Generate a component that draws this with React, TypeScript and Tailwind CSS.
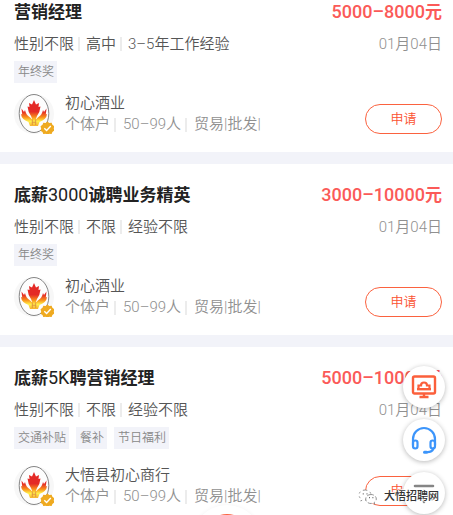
import React from "react";

type Job = {
  title: React.ReactNode;
  salary: string;
  needs: string[];
  date: string;
  tags: string[];
  company: string;
};

const num = (text: string) => <span className="text-lg leading-6 font-normal">{text}</span>;

const jobs: Job[] = [
  {
    title: "营销经理",
    salary: "5000–8000",
    needs: ["性别不限", "高中", "3–5年工作经验"],
    date: "01月04日",
    tags: ["年终奖"],
    company: "初心酒业",
  },
  {
    title: <>底薪{num("3000")}诚聘业务精英</>,
    salary: "3000–10000",
    needs: ["性别不限", "不限", "经验不限"],
    date: "01月04日",
    tags: ["年终奖"],
    company: "初心酒业",
  },
  {
    title: <>底薪{num("5K")}聘营销经理</>,
    salary: "5000–10000",
    needs: ["性别不限", "不限", "经验不限"],
    date: "01月04日",
    tags: ["交通补贴", "餐补", "节日福利"],
    company: "大悟县初心商行",
  },
];

function Facts({ items, wide = false }: { items: string[]; wide?: boolean }) {
  return (
    <ul className="flex items-center whitespace-nowrap">
      {items.map((item, i) => (
        <li key={item} className="flex items-center">
          {i > 0 && <span className={`ml-1 h-3.5 w-0.5 bg-[#ececec] ${wide ? "mr-[7px]" : "mr-1.5"}`} />}
          {item}
        </li>
      ))}
    </ul>
  );
}

function Logo({ id }: { id: string }) {
  return (
    <svg viewBox="0 0 40 40" className="size-10 shrink-0" role="img" aria-label="公司标志">
      <defs>
        <linearGradient id={id} x1="0" y1="6" x2="0" y2="32" gradientUnits="userSpaceOnUse">
          <stop offset="0.45" stopColor="#e42a26" />
          <stop offset="0.66" stopColor="#f9901b" />
          <stop offset="0.82" stopColor="#fff04a" />
          <stop offset="1" stopColor="#f6b030" />
        </linearGradient>
      </defs>
      <circle cx="20" cy="20" r="20" fill="#f7f7f7" />
      <ellipse cx="20" cy="19.5" rx="14.8" ry="19" fill="#fdfdfd" stroke="#777" strokeWidth="0.9" />
      <g fill={`url(#${id})`}>
        <path d="M20 6l2 4.500 3-1.500-.5 4 2-.5q-.5 5.500-3.500 9.500l-1.500 4h-3l-1.500-4q-3-4-3.500-9.500l2 .5-.5-4 3 1.500z" />
        <path d="M7.500 14.500l2.500 3.500 1-2q1 5 4.500 7 2 1.200 3 3.500v5.500h-2.500l-1.500-4q-7-2.500-7.500-8l1.200.5z" />
        <path d="M32.500 14.500l-2.500 3.500-1-2q-1 5-4.500 7-2 1.200-3 3.500v5.500h2.500l1.500-4q7-2.500 7.500-8l-1.200.5z" />
        <path d="M17 25h6v7h-6z" />
      </g>
      <path d="M18.300 25.500v5.500M21.700 25.500v5.500M18.300 28.200h3.400" stroke="#d98643" strokeWidth="0.8" />
      <path
        d="M33.500 27.500l2 1.700 2.600-.3.900 2.400 2.200 1.400-.7 2.500.7 2.500-2.200 1.400-.9 2.400-2.600-.3-2 1.700-2-1.700-2.600.3-.9-2.400-2.200-1.400.7-2.500-.7-2.500 2.200-1.400.9-2.400 2.600.3z"
        transform="translate(3.300 2.700) scale(0.9)"
        fill="#efaa20"
      />
      <path d="M30.300 34.300l2.300 2.200 4.200-4.400" fill="none" stroke="#fff" strokeWidth="1.400" />
    </svg>
  );
}

function JobCard({ job, id }: { job: Job; id: string }) {
  return (
    <article className="bg-white pt-[19px] pr-[11px] pb-[17px] pl-3.5">
      <div className="flex items-center justify-between">
        <h2 className="text-[17px] leading-6 font-bold text-[#222]">{job.title}</h2>
        <p className="text-lg leading-6 font-medium text-[#fb5a58]">
          {job.salary}
          <span className="text-[17px] font-bold">元</span>
        </p>
      </div>
      <div className="mt-2 flex items-center justify-between leading-6 text-[#555]">
        <Facts items={job.needs} />
        <time className="text-[#909090]">{job.date}</time>
      </div>
      <ul className={`mt-[5px] flex gap-[7px] ${job.tags.length > 1 ? "mb-4" : "mb-2.5"}`}>
        {job.tags.map((tag) => (
          <li key={tag} className="bg-[#f2f3f9] pr-[3px] pl-1 text-xs leading-[22px] text-[#888]">
            {tag}
          </li>
        ))}
      </ul>
      <div className="flex items-center">
        <Logo id={id} />
        <div className="ml-[11px] flex-1 leading-[21px]">
          <h3 className="text-[#555]">{job.company}</h3>
          <div className="text-[#909090]">
            <Facts wide items={["个体户", "50–99人", "贸易|批发|"]} />
          </div>
        </div>
        <button
          type="button"
          className="mb-px h-[30px] w-[77px] self-end rounded-full border border-[#fb623f] text-[13px] leading-7 text-[#fb5230]"
        >
          申请
        </button>
      </div>
    </article>
  );
}

const round =
  "flex size-[42px] items-center justify-center rounded-full bg-white shadow-[0_1px_5px_rgba(0,0,0,0.28)]";

export default function App() {
  return (
    <main className="relative h-screen overflow-hidden bg-white font-[Roboto,'Noto_Sans_CJK_SC',sans-serif] text-[15px] font-[350]">
      <div className="-mt-[19px] flex flex-col gap-3 bg-[#f2f3f9]">
        {jobs.map((job, i) => (
          <JobCard key={i} job={job} id={`flame-${i}`} />
        ))}
      </div>

      <div className="absolute right-2 bottom-px flex flex-col gap-[11px]">
        <button type="button" aria-label="网页版" className={round}>
          <svg viewBox="0 0 26 26" className="size-[26px]" fill="none" stroke="#fb5f3b" strokeWidth="2.400">
            <rect x="2" y="2.500" width="22" height="17" rx="1.500" />
            <path d="M13 19.500v3M8.500 23h9" />
            <path d="M6 15.200h14" strokeWidth="2.400" />
            <path d="M7.500 14.500v-3h2.500a3 3 0 0 1 6 0h2.500v3" strokeWidth="2.200" />
          </svg>
        </button>
        <button type="button" aria-label="客服" className={round}>
          <svg viewBox="0 0 28 30" className="h-[30px] w-7" fill="none" stroke="#3c95fb" strokeWidth="2.200" strokeLinecap="round">
            <path d="M3 20v-6a11 11 0 0 1 22 0v6" />
            <rect x="3" y="15.500" width="4.500" height="8" rx="2.200" />
            <rect x="20.500" y="15.500" width="4.500" height="8" rx="2.200" />
            <path d="M23.500 23.500c-1 2.500-3.500 3.700-6 3.700" />
            <path d="M14.500 27.200h2" strokeWidth="3" />
          </svg>
        </button>
        <button type="button" aria-label="返回顶部" className={round}>
          <svg viewBox="0 0 24 24" className="size-6" fill="none" stroke="#858585" strokeWidth="2.600" strokeLinecap="round">
            <path d="M3 5h18M12 21V10M4 18l8-7 8 7" />
          </svg>
        </button>
      </div>

      <button
        type="button"
        aria-label="发布"
        className="absolute top-[505px] left-1/2 flex size-[70px] -translate-x-1/2 justify-center rounded-full bg-white pt-[9px] shadow-[0_0_4px_rgba(0,0,0,0.05)]"
      >
        <span className="size-12 rounded-full bg-[#fb6340]" />
      </button>

      <div className="absolute right-3.5 bottom-2.5 flex items-center gap-1.5">
        <svg viewBox="0 0 20 16" className="h-4 w-5" fill="#fff" stroke="#777" strokeWidth="0.800">
          <path d="M7 1C3.500 1 1 3.200 1 6c0 1.600.9 3 2.200 3.900L2.700 12l2.200-1.200c3 .8 8.100-.5 8.100-4.800C13 3.200 10.500 1 7 1z" strokeDasharray="2 3" />
          <path d="M13 5.500c-3 0-5.300 2-5.300 4.500s2.300 4.500 5.300 4.500l1.800-.3 1.900 1-.5-1.700c1.300-.8 2.100-2.100 2.100-3.500 0-2.500-2.300-4.500-5.300-4.500z" strokeDasharray="4 2" />
          <path d="M4.800 4.800h.8M8.600 4.800h.8M11 8.700h.8M14.500 8.700h.8" stroke="#444" strokeWidth="1.200" />
        </svg>
        <span className="text-[11px] leading-4 font-medium text-[#333] [text-shadow:0_0_1px_#fff,1px_0_1px_#fff,-1px_0_1px_#fff,0_1px_1px_#fff,0_-1px_1px_#fff]">
          大悟招聘网
        </span>
      </div>
    </main>
  );
}
